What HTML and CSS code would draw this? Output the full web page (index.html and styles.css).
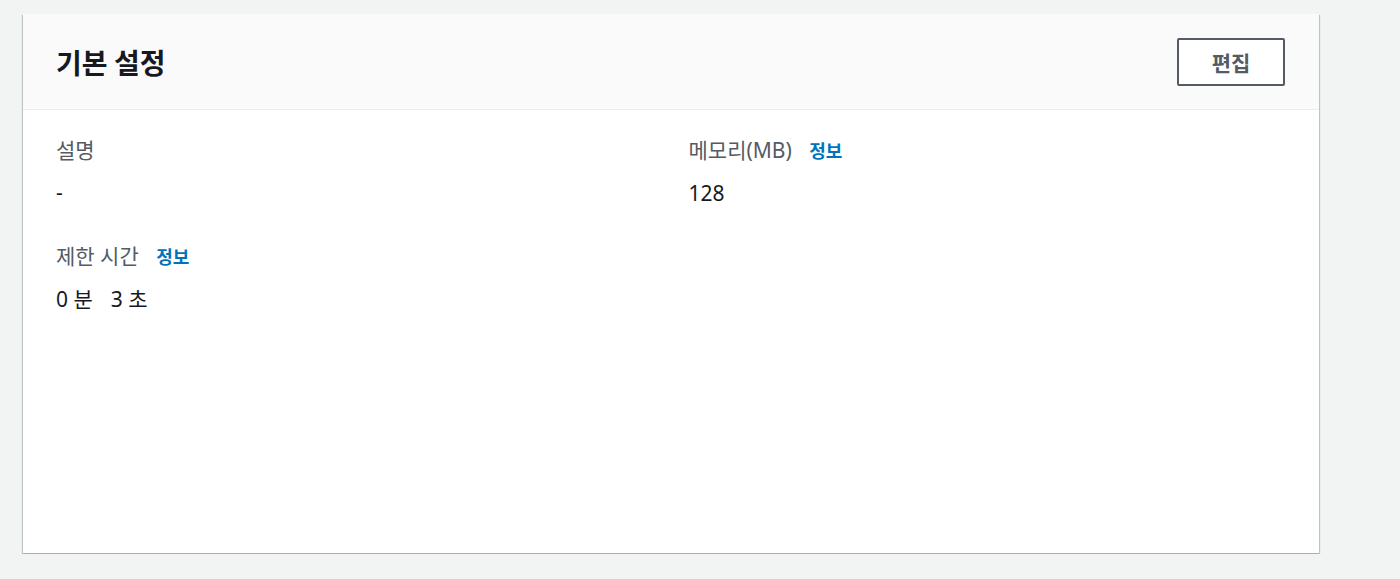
FILE: index.html
```html
<!DOCTYPE html>
<html>
<head>
    <link rel="stylesheet" href="styles.css">
</head>
<body>
    <div class="card">
        <div class="card-header">
            <h2>기본 설정</h2>
            <button class="btn">편집</button>
        </div>
        <div class="card-body">
            <div class="col">
                <div class="field">
                    <div class="label">설명</div>
                    <div class="value">-</div>
                </div>
                <div class="field">
                    <div class="label">제한 시간 <a class="info" href="#">정보</a></div>
                    <div class="value"><span class="part">0 분</span><span class="part">3 초</span></div>
                </div>
            </div>
            <div class="col">
                <div class="field">
                    <div class="label">메모리(MB) <a class="info" href="#">정보</a></div>
                    <div class="value">128</div>
                </div>
            </div>
        </div>
    </div>
</body>
</html>
```

FILE: styles.css
```css
body { background-color: #f2f3f3; color: #16191f; font-family: "Noto Sans", "Noto Sans CJK KR", sans-serif; margin: 0; padding: 14px 0 0 23px; }
.card { width: 1296px; min-height: 539px; background-color: #ffffff; border-bottom: 1px solid #a9b0b0; box-shadow: 0 1px 1px 0 rgba(0,28,36,0.25), 1px 1px 1px 0 rgba(0,28,36,0.18), -1px 1px 1px 0 rgba(0,28,36,0.18); display: flex; flex-direction: column; }
.card-header { height: 95px; background-color: #fafafa; border-bottom: 1px solid #eaeded; display: flex; align-items: center; justify-content: space-between; padding: 0 34px 0 33px; }
.card-header h2 { margin: 0; font-size: 28px; font-weight: 700; color: #16191f; font-family: "Noto Sans CJK KR", sans-serif; }
.btn { width: 108px; height: 48px; background-color: #ffffff; border: 2px solid #545b64; border-radius: 2px; color: #545b64; font-size: 21px; font-weight: 700; font-family: "Noto Sans CJK KR", sans-serif; cursor: pointer; }
.card-body { display: grid; grid-template-columns: 1fr 1fr; column-gap: 35px; padding: 26px 33px; }
.field { margin-bottom: 36px; }
.label { font-size: 21px; line-height: 28px; color: #545b64; }
.info { font-size: 18px; font-weight: 700; color: #0073bb; text-decoration: none; margin-left: 12px; }
.value { font-size: 21px; line-height: 28px; margin-top: 14px; color: #16191f; }
.part { margin-right: 18px; }
```
